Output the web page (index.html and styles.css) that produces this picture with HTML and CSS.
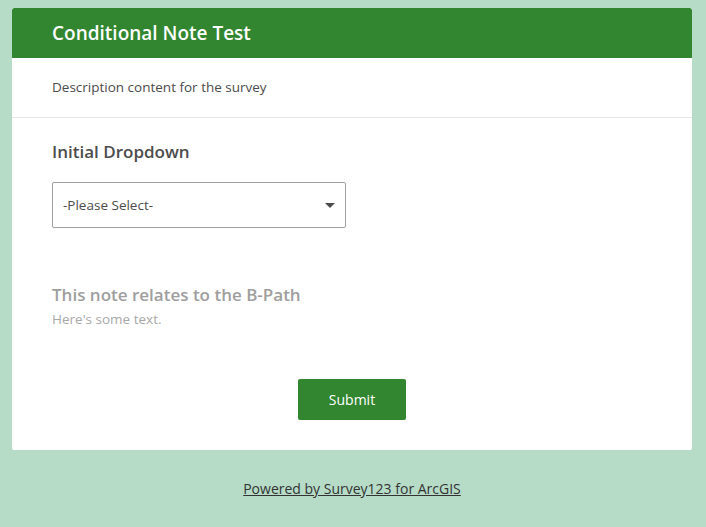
FILE: index.html
```html
<!DOCTYPE html>
<html>
<head>
<meta charset="utf-8">
<link rel="stylesheet" href="styles.css">
</head>
<body>
<div class="card">
  <div class="header"><h1 class="title">Conditional Note Test</h1></div>
  <div class="desc">Description content for the survey</div>
  <div class="form">
    <div class="question">
      <div class="label">Initial Dropdown</div>
      <div class="select">
        <span class="select-text">-Please Select-</span>
        <svg class="caret" width="10" height="6" viewBox="0 0 10 6"><path d="M0 0H10L5 5Z" fill="#4c4c4c"/></svg>
      </div>
    </div>
    <div class="note">
      <div class="note-title">This note relates to the B-Path</div>
      <div class="note-text">Here's some text.</div>
    </div>
    <div class="actions"><button class="submit">Submit</button></div>
  </div>
</div>
<div class="footer"><a class="powered" href="#">Powered by Survey123 for ArcGIS</a></div>
</body>
</html>
```
FILE: styles.css
```css
html, body {
  margin: 0;
  padding: 0;
}
body {
  background: #b6dcc8;
  font-family: "Open Sans", Lato, sans-serif;
  color: #4c4c4c;
  padding: 8px 14px 0 12px;
}
.card {
  background: #fff;
  border-radius: 2px;
  overflow: hidden;
}
.header {
  background: #31862f;
  height: 50px;
  display: flex;
  align-items: center;
  padding: 0 40px;
  border-radius: 2px 2px 0 0;
}
.title {
  margin: 0;
  color: #fff;
  font-size: 19px;
  font-weight: 600;
}
.desc {
  padding: 20px 40px 21px;
  font-size: 13.5px;
  line-height: 18px;
  border-bottom: 1px solid #e6e6e6;
}
.form {
  padding: 23px 40px 30px;
}
.label {
  font-size: 17px;
  font-weight: 600;
  line-height: 22px;
  margin-bottom: 19px;
}
.select {
  width: 294px;
  height: 46px;
  box-sizing: border-box;
  border: 1px solid #a0a0a0;
  border-radius: 2px;
  display: flex;
  align-items: center;
  justify-content: space-between;
  padding: 0 10px 0 10px;
}
.select-text {
  font-size: 13.5px;
}
.caret {
  margin-top: 1px;
}
.note {
  margin-top: 56px;
}
.note-title {
  font-size: 17px;
  font-weight: 600;
  color: #9e9e9e;
  line-height: 22px;
}
.note-text {
  font-size: 13.5px;
  color: #a8a8a8;
  line-height: 18px;
  margin-top: 4px;
}
.actions {
  display: flex;
  justify-content: center;
  margin-top: 51px;
}
.submit {
  background: #31862f;
  color: #fff;
  border: none;
  border-radius: 2px;
  width: 108px;
  height: 41px;
  font-family: inherit;
  font-size: 14px;
}
.footer {
  text-align: center;
  padding-top: 27px;
}
.powered {
  color: #333;
  font-size: 14px;
}
```
